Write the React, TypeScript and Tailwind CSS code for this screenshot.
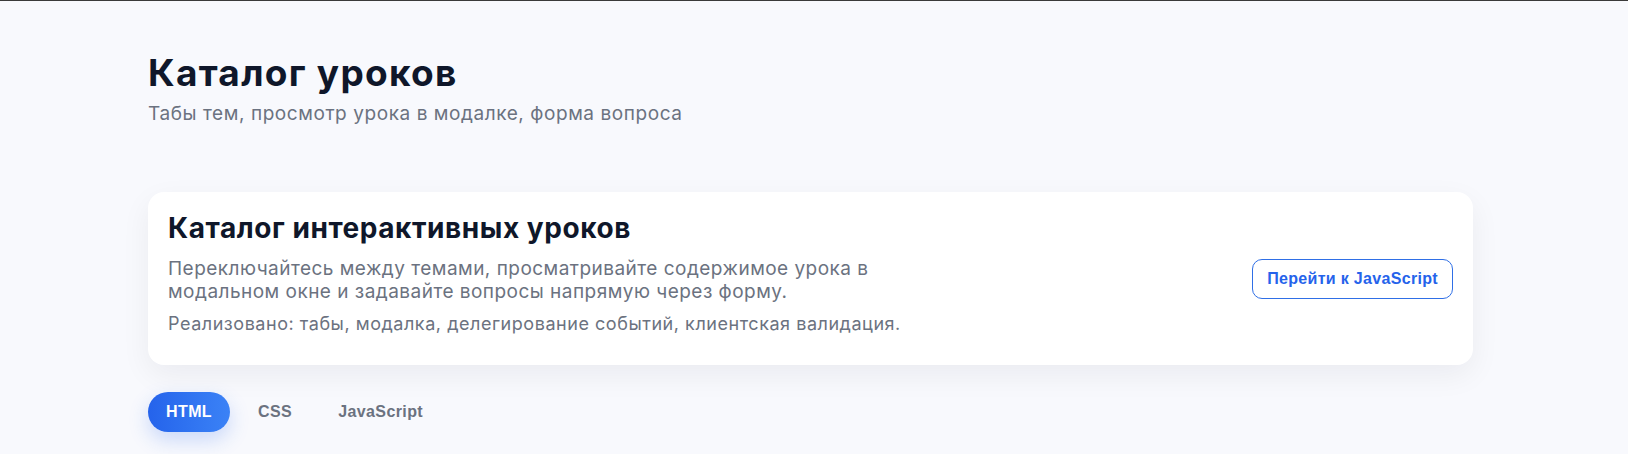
const tabs = ['HTML', 'CSS', 'JavaScript'];

export default function App() {
  const active = 'HTML';

  return (
    <div className="min-h-[454px] border-t border-[#3a3a3a] bg-[#f8f9fd] font-['Inter',sans-serif]">
      <div className="ml-[148px] w-[1325px] pt-[49px]">
        <h1 className="text-[37px] font-bold leading-[45px] tracking-[0.035em] text-[#0f172a]">Каталог уроков</h1>
        <p className="mt-[5px] text-[19px] leading-[28px] tracking-[0.03em] text-[#6b7280]">
          Табы тем, просмотр урока в модалке, форма вопроса
        </p>

        <section className="mt-16 flex items-center justify-between rounded-2xl bg-white p-5 shadow-[0_10px_30px_rgba(15,23,42,0.06)]">
          <div className="max-w-3xl">
            <h2 className="text-[28px] font-bold leading-[32px] tracking-[0.02em] text-[#0f172a]">
              Каталог интерактивных уроков
            </h2>
            <p className="mt-[13px] text-[19px] leading-[23px] tracking-[0.025em] text-[#6b7280]">
              Переключайтесь между темами, просматривайте содержимое урока в модальном окне и задавайте
              вопросы напрямую через форму.
            </p>
            <p className="mt-[9px] mb-[9px] text-[18px] leading-[24px] tracking-[0.03em] text-[#6b7280]">
              Реализовано: табы, модалка, делегирование событий, клиентская валидация.
            </p>
          </div>
          <button className="rounded-[10px] border border-[#2f6fe6] bg-white px-[14px] py-[10px] font-['Liberation_Sans',Arial,sans-serif] text-[16px] font-bold leading-[18px] tracking-[0.02em] text-[#2563eb]">
            Перейти к JavaScript
          </button>
        </section>

        <nav className="mt-[27px] flex gap-2.5 font-['Liberation_Sans',Arial,sans-serif] tracking-[0.025em]">
          {tabs.map((t) =>
            t === active ? (
              <button
                key={t}
                className="h-10 rounded-full bg-gradient-to-r from-[#2563eb] to-[#3b82f6] px-[18px] text-[16px] font-bold text-white shadow-[0_8px_20px_rgba(37,99,235,0.22)]"
              >
                {t}
              </button>
            ) : (
              <button key={t} className="h-10 rounded-full px-[18px] text-[16px] font-bold text-[#6b7280]">
                {t}
              </button>
            )
          )}
        </nav>
      </div>
    </div>
  );
}
